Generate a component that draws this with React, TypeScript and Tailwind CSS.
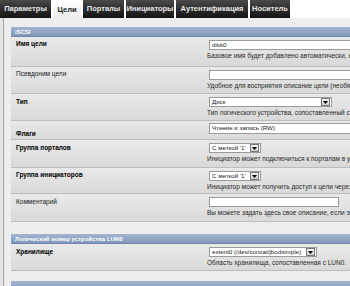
import React from "react";

const font = { fontFamily: '"Liberation Sans", Arial, sans-serif' };

function Arrow() {
  return (
    <span className="ml-auto flex h-[8px] w-[9px] items-center justify-center border border-[#7a7a7a] bg-gradient-to-b from-[#f4f4f4] to-[#cfcfcf]">
      <svg width="5" height="3" viewBox="0 0 5 3">
        <path d="M0 0 L5 0 L2.5 3 Z" fill="#000" />
      </svg>
    </span>
  );
}

function Select({ text, w }: { text: string; w: string }) {
  return (
    <div className={`flex h-[10px] items-center border border-[#9a9a9a] bg-white pl-[2px] pr-[1px] text-[6.2px] leading-none text-[#222] ${w}`}>
      <span className="whitespace-nowrap">{text}</span>
      <Arrow />
    </div>
  );
}

function Input({ text, w }: { text?: string; w: string }) {
  return (
    <div className={`flex h-[10px] items-center border border-[#9a9a9a] bg-white pl-[2px] text-[6.2px] leading-none text-[#222] ${w}`}>
      {text}
    </div>
  );
}

function Row({
  label,
  bold,
  h,
  labelPt,
  children,
  desc,
}: {
  label: string;
  bold?: boolean;
  h: string;
  labelPt: string;
  children: React.ReactNode;
  desc?: string;
}) {
  return (
    <div className={`flex border-b border-[#bcbcbc] bg-gradient-to-b from-[#e9e9e9] to-[#d9d9d9] ${h}`}>
      <div className={`w-[192px] shrink-0 pl-[5px] text-[6.5px] leading-[8px] ${labelPt} ${bold ? "font-bold text-black" : "text-[#222]"}`}>
        {label}
      </div>
      <div className="flex min-w-0 flex-1 flex-col overflow-hidden pl-[4px] pt-[3px]">
        {children}
        {desc && (
          <div className="mt-[2px] whitespace-nowrap text-[6.5px] leading-[8px] text-[#2a2a2a]">{desc}</div>
        )}
      </div>
    </div>
  );
}

function Header({ text }: { text: string }) {
  return (
    <div className="flex h-[10px] items-center border-b border-[#6f86a8] bg-gradient-to-b from-[#a3b5cf] to-[#8298b9] pl-[4px] text-[6px] font-bold leading-none text-white">
      {text}
    </div>
  );
}

const tabs = [
  { t: "Параметры", w: "w-[51px]" },
  { t: "Цели", w: "w-[28px]", active: true },
  { t: "Порталы", w: "w-[41px]" },
  { t: "Инициаторы", w: "w-[48px]" },
  { t: "Аутентификация", w: "w-[72px]" },
  { t: "Носитель", w: "w-[40px]" },
];

export default function App() {
  return (
    <div className="flex h-[286px] w-[350px] flex-col overflow-hidden bg-white" style={font}>
      <div className="flex h-[18px] shrink-0 gap-[2px] bg-white">
        {tabs.map((tab) =>
          tab.active ? (
            <div
              key={tab.t}
              className={`mt-[2px] flex items-center justify-center bg-gradient-to-b from-[#ffffff] to-[#ececec] text-[7.5px] font-bold text-[#222] ${tab.w}`}
            >
              {tab.t}
            </div>
          ) : (
            <div
              key={tab.t}
              className={`flex items-center justify-center whitespace-nowrap bg-gradient-to-b from-[#4a4a4a] to-[#141414] text-[7.5px] font-bold text-[#e8e8e8] ${tab.w}`}
            >
              {tab.t}
            </div>
          )
        )}
      </div>
      <div className="flex flex-1 bg-[#e6e6e6] pl-[3px]">
        <div className="flex min-w-0 flex-1 flex-col border-l border-[#a2a2a2] bg-[#ededed] pl-[7px] pt-[9px]">
          <Header text="iSCSI" />
          <Row label="Имя цели" bold h="h-[30px]" labelPt="pt-[3px]" desc="Базовое имя будет добавлено автоматически, если">
            <Input text="disk0" w="w-[220px] ml-[2px]" />
          </Row>
          <Row label="Псевдоним цели" h="h-[27px]" labelPt="pt-[3px]" desc="Удобное для восприятия описание цели (необяз">
            <Input w="w-[220px] ml-[2px]" />
          </Row>
          <Row label="Тип" bold h="h-[27px]" labelPt="pt-[4px]" desc="Тип логического устройства, сопоставленный с L">
            <Select text="Диск" w="w-[123px] ml-[2px]" />
          </Row>
          <Row label="Флаги" bold h="h-[19px]" labelPt="pt-[9px]">
            <div className="-mt-[1px]">
              <Input text="Чтение и запись (RW)" w="w-[220px] ml-[2px] h-[11px]" />
            </div>
          </Row>
          <Row label="Группа порталов" bold h="h-[28px]" labelPt="pt-[4px]" desc="Инициатор может подключиться к порталам в ук">
            <Select text="С меткой '1'" w="w-[52px] ml-[2px]" />
          </Row>
          <Row label="Группа инициаторов" bold h="h-[26px]" labelPt="pt-[3px]" desc="Инициатор может получить доступ к цели через">
            <Select text="С меткой '1'" w="w-[52px] ml-[2px]" />
          </Row>
          <Row label="Комментарий" h="h-[28px]" labelPt="pt-[4px]" desc="Вы можете задать здесь свое описание, если это">
            <Input w="w-[130px] ml-[2px]" />
          </Row>
          <div className="h-[12px] shrink-0" />
          <Header text="Логический номер устройства LUN0" />
          <Row label="Хранилище" bold h="h-[27px]" labelPt="pt-[4px]" desc="Область хранилища, сопоставленная с LUN0.">
            <Select text="extent0 (/dev/concat/jbodsimple)" w="w-[108px] ml-[2px]" />
          </Row>
          <div className="h-[10px] shrink-0" />
          <Header text="" />
        </div>
      </div>
    </div>
  );
}
